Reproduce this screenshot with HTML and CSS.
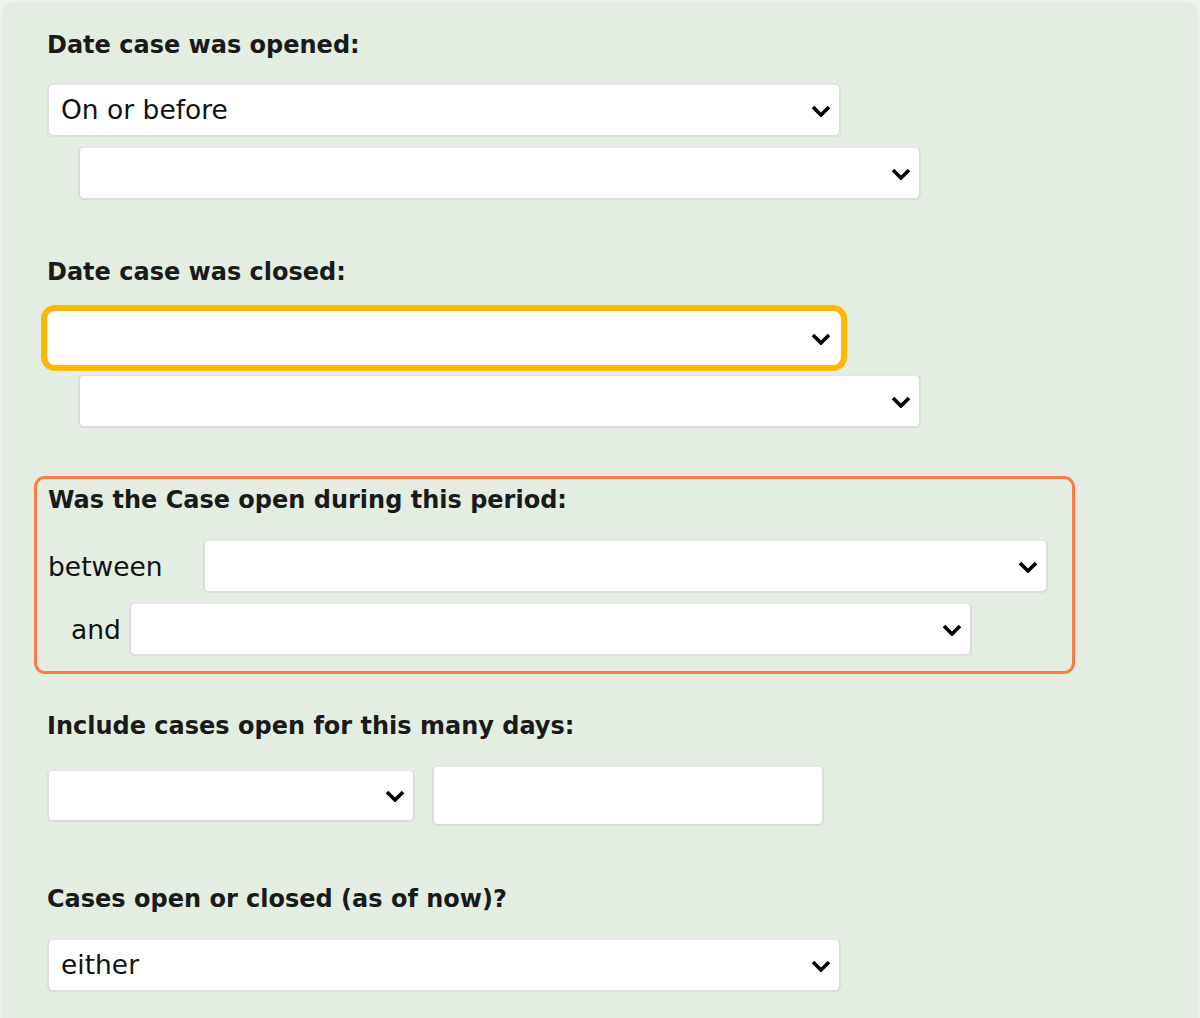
FILE: index.html
```html
<!DOCTYPE html>
<html lang="en">
<head>
<meta charset="utf-8">
<title>Case filters</title>
<link rel="stylesheet" href="styles.css">
</head>
<body>
<div class="panel">
  <div class="label l1">Date case was opened:</div>
  <div class="sel w793">
    <span class="val">On or before</span>
    <svg class="chev" viewBox="0 0 20 12"><path d="M2 2 L10 10 L18 2"/></svg>
  </div>
  <div class="sel w842 indent">
    <span class="val"></span>
    <svg class="chev" viewBox="0 0 20 12"><path d="M2 2 L10 10 L18 2"/></svg>
  </div>

  <div class="label l2">Date case was closed:</div>
  <div class="sel w793 focused">
    <span class="val"></span>
    <svg class="chev" viewBox="0 0 20 12"><path d="M2 2 L10 10 L18 2"/></svg>
  </div>
  <div class="sel w842 indent">
    <span class="val"></span>
    <svg class="chev" viewBox="0 0 20 12"><path d="M2 2 L10 10 L18 2"/></svg>
  </div>

  <div class="period">
    <div class="label l3">Was the Case open during this period:</div>
    <div class="prow between">
      <span class="plabel">between</span>
      <div class="sel w844">
        <span class="val"></span>
        <svg class="chev" viewBox="0 0 20 12"><path d="M2 2 L10 10 L18 2"/></svg>
      </div>
    </div>
    <div class="prow and">
      <span class="plabel">and</span>
      <div class="sel w842">
        <span class="val"></span>
        <svg class="chev" viewBox="0 0 20 12"><path d="M2 2 L10 10 L18 2"/></svg>
      </div>
    </div>
  </div>

  <div class="label l4">Include cases open for this many days:</div>
  <div class="days">
    <div class="sel w367 short">
      <span class="val"></span>
      <svg class="chev" viewBox="0 0 20 12"><path d="M2 2 L10 10 L18 2"/></svg>
    </div>
    <div class="txt"></div>
  </div>

  <div class="label l5">Cases open or closed (as of now)?</div>
  <div class="sel w793">
    <span class="val">either</span>
    <svg class="chev" viewBox="0 0 20 12"><path d="M2 2 L10 10 L18 2"/></svg>
  </div>
</div>
</body>
</html>
```

FILE: styles.css
```css
html, body {
  margin: 0;
  padding: 0;
  background: #f2f2f2;
}
body {
  font-family: "DejaVu Sans", Verdana, sans-serif;
  color: #111;
  height: 1018px;
  overflow: hidden;
}
.panel {
  margin: 1px 1px 0 1px;
  border: 2px solid #ececec;
  border-bottom: none;
  border-radius: 14px 14px 0 0;
  background: #e3ede2;
  height: 1030px;
  padding: 0 0 0 44px;
  box-sizing: border-box;
}
.label {
  font-size: 24px;
  font-weight: 700;
  line-height: 32px;
  height: 32px;
  color: #1a1a1a;
}
.l1 { padding-top: 26px; margin-bottom: 22px; }
.l2 { margin-top: 56px; margin-bottom: 23px; }
.l3 { margin-bottom: 23px; }
.l4 { margin-top: 36px; margin-bottom: 23px; }
.l5 { margin-top: 58px; margin-bottom: 23px; }

.sel {
  box-sizing: border-box;
  height: 54px;
  background: #fff;
  border: 2px solid #dcdcdc;
  border-top-color: #e6e6e6;
  border-radius: 6px;
  display: flex;
  align-items: center;
  justify-content: space-between;
  padding: 0 8px 0 12px;
  font-size: 26.5px;
}
.val { color: #111; line-height: 1; }
.chev {
  width: 20px;
  height: 12px;
  fill: none;
  stroke: #000;
  stroke-width: 3.6;
  stroke-linecap: butt;
  stroke-linejoin: miter;
  margin-top: 2px;
}
.w793 { width: 794px; }
.w842 { width: 843px; }
.w844 { width: 845px; }
.w367 { width: 368px; }
.indent { margin-left: 31px; margin-top: 9px; }
.focused {
  border-color: #fff;
  box-shadow: 0 0 0 6px #ffb703;
  border-radius: 8px;
}
.l2 + .focused { margin-top: 23px; }
.period {
  box-sizing: border-box;
  width: 1041px;
  height: 198px;
  margin-top: 48px;
  margin-left: -13px;
  border: 3px solid #ff7a45;
  border-radius: 11px;
  padding: 5px 0 0 11px;
}
.prow {
  display: flex;
  align-items: center;
  font-size: 26.5px;
}
.between .plabel { width: 155px; }
.and { margin-top: 9px; padding-left: 23px; }
.and .plabel { width: 58px; }
.days {
  display: flex;
  align-items: center;
  gap: 17px;
  height: 60px;
}
.short { height: 53px; }
.txt {
  box-sizing: border-box;
  width: 392px;
  height: 61px;
  background: #fff;
  border: 2px solid #dcdcdc;
  border-top-color: #e6e6e6;
  border-radius: 6px;
}
```
